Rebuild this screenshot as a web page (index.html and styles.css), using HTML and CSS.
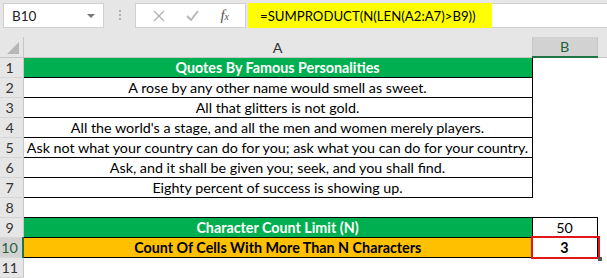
FILE: index.html
```html
<!DOCTYPE html>
<html lang="en">
<head>
    <meta charset="UTF-8">
    <title>Character Count Limit</title>
    <link rel="stylesheet" href="styles.css">
</head>
<body>
    <!-- Formula bar -->
    <div class="formula-bar">
        <div class="name-box">
            <span>B10</span>
            <span class="drop"></span>
        </div>
        <div class="grip">
            <i></i><i></i><i></i>
        </div>
        <div class="fx-box">
            <svg class="ico" width="12" height="12" viewBox="0 0 12 12">
                <path d="M1 1 L11 11 M11 1 L1 11" stroke="#b4b4b4" stroke-width="1.4" fill="none"/>
            </svg>
            <svg class="ico" width="13" height="11" viewBox="0 0 13 11">
                <path d="M1 6 L5 10 L12 1" stroke="#b4b4b4" stroke-width="1.8" fill="none"/>
            </svg>
            <span class="fx">f<sub>x</sub></span>
        </div>
        <div class="formula-input">
            <span class="formula">=SUMPRODUCT(N(LEN(A2:A7)&gt;B9))</span>
        </div>
    </div>

    <!-- Sheet -->
    <table class="sheet">
        <colgroup>
            <col class="c-head">
            <col class="c-a">
            <col class="c-b">
            <col class="c-rest">
        </colgroup>
        <tr class="col-heads">
            <th class="corner"><span class="tri"></span></th>
            <th>A</th>
            <th class="sel-col">B</th>
            <th></th>
        </tr>
        <tr>
            <th class="rh">1</th>
            <td class="box green title">Quotes By Famous Personalities</td>
            <td></td><td></td>
        </tr>
        <tr>
            <th class="rh">2</th>
            <td class="box">A rose by any other name would smell as sweet.</td>
            <td></td><td></td>
        </tr>
        <tr>
            <th class="rh">3</th>
            <td class="box">All that glitters is not gold.</td>
            <td></td><td></td>
        </tr>
        <tr>
            <th class="rh">4</th>
            <td class="box">All the world's a stage, and all the men and women merely players.</td>
            <td></td><td></td>
        </tr>
        <tr>
            <th class="rh">5</th>
            <td class="box">Ask not what your country can do for you; ask what you can do for your country.</td>
            <td></td><td></td>
        </tr>
        <tr>
            <th class="rh">6</th>
            <td class="box">Ask, and it shall be given you; seek, and you shall find.</td>
            <td></td><td></td>
        </tr>
        <tr>
            <th class="rh">7</th>
            <td class="box">Eighty percent of success is showing up.</td>
            <td></td><td></td>
        </tr>
        <tr>
            <th class="rh">8</th>
            <td></td><td></td><td></td>
        </tr>
        <tr>
            <th class="rh">9</th>
            <td class="box green title">Character Count Limit (N)</td>
            <td class="box num">50</td>
            <td></td>
        </tr>
        <tr>
            <th class="rh sel-row">10</th>
            <td class="box orange title">Count Of Cells With More Than N Characters</td>
            <td class="box num bold active">3<span class="cursor"><span class="handle"></span></span></td>
            <td></td>
        </tr>
        <tr>
            <th class="rh">11</th>
            <td></td><td></td><td></td>
        </tr>
    </table>
</body>
</html>
```

FILE: styles.css
```css
body {
    margin: 0;
    width: 607px;
    height: 278px;
    overflow: hidden;
    background: #ffffff;
    font-family: 'Lato', 'Open Sans', sans-serif;
    color: #000;
}

.formula-bar {
    display: flex;
    align-items: flex-start;
    height: 37px;
    padding-top: 3px;
    box-sizing: border-box;
    background: #e6e6e6;
}

.name-box {
    display: flex;
    align-items: center;
    justify-content: space-between;
    width: 101px;
    height: 25px;
    margin-left: 3px;
    padding: 0 8px;
    box-sizing: border-box;
    background: #fff;
    border: 1px solid #d0d0d0;
    font-size: 13.5px;
    color: #222;
}

.drop {
    width: 0;
    height: 0;
    border-left: 4px solid transparent;
    border-right: 4px solid transparent;
    border-top: 4px solid #777;
}

.grip {
    display: flex;
    flex-direction: column;
    gap: 2px;
    width: 31px;
    align-items: center;
    padding-top: 7px;
}

.grip i {
    width: 2px;
    height: 2px;
    background: #b0b0b0;
}

.fx-box {
    display: flex;
    align-items: center;
    justify-content: space-between;
    width: 111px;
    height: 25px;
    padding: 0 16px 0 17px;
    box-sizing: border-box;
    background: #fff;
    border: 1px solid #d0d0d0;
}

.fx {
    font-family: 'Liberation Serif', serif;
    font-style: italic;
    font-size: 15px;
    color: #555;
}

.fx sub {
    font-size: 10px;
    vertical-align: 0;
}

.formula-input {
    flex: 1;
    height: 25px;
    margin-left: 2px;
    background: #fff;
    border: 1px solid #d0d0d0;
    border-right: none;
    box-sizing: border-box;
    display: flex;
}

.formula {
    display: flex;
    align-items: center;
    width: 244px;
    padding-left: 12px;
    box-sizing: border-box;
    background: #ffff00;
    font-size: 13.2px;
    margin: -1px 0 -1px -1px;
}

.sheet {
    border-collapse: collapse;
    table-layout: fixed;
    width: 607px;
    font-size: 14.3px;
}

.c-head { width: 23px; }
.c-a { width: 509px; }
.c-b { width: 65px; }
.c-rest { width: 10px; }

.sheet tr { height: 20px; }

.sheet .col-heads { height: 20px; }

.sheet td {
    padding: 0;
    text-align: center;
    line-height: 17px;
    white-space: nowrap;
    overflow: hidden;
}

.col-heads th {
    background: #e6e6e6;
    font-weight: normal;
    color: #333;
    border-right: 1px solid #c6c6c6;
    border-bottom: 1px solid #c6c6c6;
    vertical-align: bottom;
    padding: 0 0 1px;
    line-height: 17px;
}

.col-heads th:last-child { border-right: none; }

.corner {
    position: relative;
}

.tri {
    position: absolute;
    right: 4px;
    bottom: 3px;
    width: 0;
    height: 0;
    border-left: 12px solid transparent;
    border-bottom: 12px solid #b7b7b7;
}

.sel-col {
    background: #d2d2d2 !important;
    color: #1f5f3c !important;
    border-bottom: 2px solid #217346 !important;
}

.rh {
    background: #e6e6e6;
    font-weight: normal;
    color: #333;
    border-right: 1px solid #c6c6c6;
    border-bottom: 1px solid #d6d6d6;
    padding: 0 3px 0 0;
    line-height: 17px;
    text-align: center;
}

.sel-row {
    background: #d2d2d2;
    color: #1f5f3c;
    border-right: 2px solid #217346;
}

.box {
    border: 1px solid #000;
}

.green {
    background: #00b050;
    color: #fff;
}

.orange {
    background: #ffc000;
}

.title {
    font-weight: bold;
}

.bold {
    font-weight: bold;
}

.active {
    position: relative;
    overflow: visible !important;
}

.cursor {
    position: absolute;
    left: -2px;
    top: -2px;
    right: -3px;
    bottom: -2px;
    border: 2px solid #e0161b;
}

.handle {
    position: absolute;
    right: -4px;
    bottom: -4px;
    width: 4px;
    height: 4px;
    background: #555;
}
```
